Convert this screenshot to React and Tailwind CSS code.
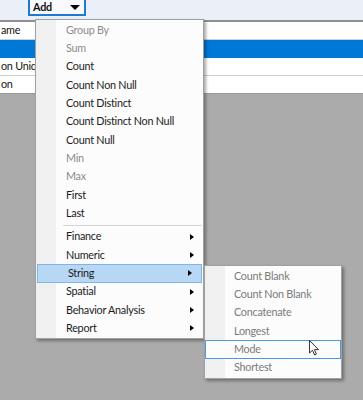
import React from 'react'

const mainItems = [
  { label: 'Group By', disabled: true },
  { label: 'Sum', disabled: true },
  { label: 'Count' },
  { label: 'Count Non Null' },
  { label: 'Count Distinct' },
  { label: 'Count Distinct Non Null' },
  { label: 'Count Null' },
  { label: 'Min', disabled: true },
  { label: 'Max', disabled: true },
  { label: 'First' },
  { label: 'Last' },
]

const groupItems = ['Finance', 'Numeric', 'String', 'Spatial', 'Behavior Analysis', 'Report']

const stringItems = ['Count Blank', 'Count Non Blank', 'Concatenate', 'Longest', 'Mode', 'Shortest']

function Arrow() {
  return <span className="ml-auto mr-[9px] h-0 w-0 border-y-[3.5px] border-l-[4px] border-y-transparent border-l-black" />
}

function MenuItem({ label, disabled, sub, active }) {
  return (
    <div
      className={`flex h-[18.33px] items-center pl-[30px] ${
        active ? 'mx-[1px] border border-[#7fb5e9] bg-[#b7d7f4] pl-[28px]' : ''
      } ${disabled ? 'text-[#8b8b8b]' : 'text-[#1b1b1b]'}`}
    >
      <span className="leading-none">{label}</span>
      {sub && <Arrow />}
    </div>
  )
}

function Cursor() {
  return (
    <svg className="absolute left-[309px] top-[340px]" width="11" height="17" viewBox="0 0 11 17">
      <path d="M0.5 0.5 L0.5 13 L3.5 10.2 L5.6 15 L7.4 14.2 L5.4 9.6 L9.5 9.6 Z" fill="#fff" stroke="#333" strokeWidth="1" />
    </svg>
  )
}

export default function App() {
  return (
    <div className="relative h-[400px] w-[363px] overflow-hidden bg-[#ababab] font-['Lato',sans-serif] text-[10.8px] tracking-[-0.25px]">
      <div className="flex h-[22px] items-start border-b-2 border-[#8f8f8f] bg-[#eaeff8] pl-[28px]">
        <div className="flex h-[16px] w-[58px] items-center border-2 border-t-0 border-[#1f78d1] bg-[#f7f9fd] pl-[3px] pr-[4px] text-[#111]">
          <span className="font-bold leading-none">Add</span>
          <span className="ml-auto h-0 w-0 border-x-[5px] border-t-[5px] border-x-transparent border-t-black" />
        </div>
      </div>
      <div className="bg-white">
        <div className="flex h-[18px] items-center border-b border-[#cfcfcf] text-[#111]">
          <span className="w-[35px] overflow-hidden whitespace-nowrap pl-[1px]">ame</span>
        </div>
        <div className="h-[18px] bg-[#0078d7]" />
        <div className="flex h-[18px] items-center border-b border-[#cfcfcf] text-[#111]">
          <span className="w-[35px] overflow-hidden whitespace-nowrap pl-[1px]">on Uniq</span>
        </div>
        <div className="flex h-[18px] items-center border-b border-[#9a9a9a] text-[#111]">
          <span className="w-[35px] overflow-hidden whitespace-nowrap pl-[1px]">on</span>
        </div>
      </div>

      {/* main dropdown */}
      <div className="absolute left-[35px] top-[19px] w-[169px] border border-[#a0a0a0] bg-[#fcfcfc] pt-[1px] shadow-[2px_2px_3px_rgba(0,0,0,0.35)]">
        <div className="absolute bottom-0 left-0 top-0 w-[20px] bg-[#f0f0f0]" />
        <div className="relative">
          {mainItems.map((it) => (
            <MenuItem key={it.label} {...it} />
          ))}
          <div className="ml-[27px] mr-[1px] my-[2px] h-px bg-[#d5d5d5]" />
          {groupItems.map((g) => (
            <MenuItem key={g} label={g} sub active={g === 'String'} />
          ))}
        </div>
      </div>

      {/* string submenu */}
      <div className="absolute left-[204px] top-[265px] w-[138px] border border-[#a0a0a0] bg-[#fcfcfc] py-[1px] shadow-[2px_2px_3px_rgba(0,0,0,0.35)]">
        <div className="absolute bottom-0 left-0 top-0 w-[20px] bg-[#f0f0f0]" />
        <div className="relative">
          {stringItems.map((s) => (
            <div
              key={s}
              className={`flex h-[18.33px] items-center text-[#7b7b7b] ${
                s === 'Mode' ? 'border border-[#4b98e4] bg-[#fcfcfc] pl-[28px]' : 'pl-[29px]'
              }`}
            >
              <span className="leading-none">{s}</span>
            </div>
          ))}
        </div>
      </div>

      <Cursor />
    </div>
  )
}
